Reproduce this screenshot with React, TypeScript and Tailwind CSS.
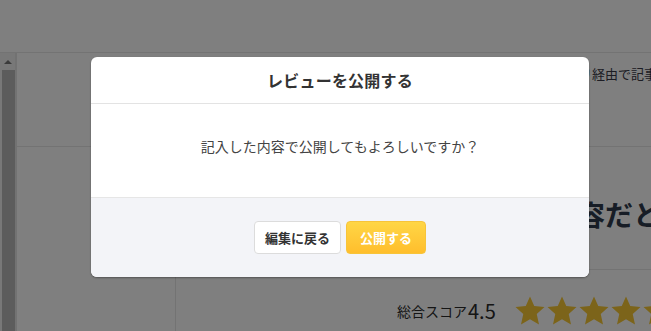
import React from "react";

const Star = () => (
  <svg width="30" height="30" viewBox="0 0 24 24" className="shrink-0">
    <polygon
      points="12,0.4 15.4,8 23.6,8.8 17.4,14.4 19.2,22.8 12,18.5 4.8,22.8 6.6,14.4 0.4,8.8 8.6,8"
      fill="#f8c935"
    />
  </svg>
);

export default function App() {
  return (
    <div
      className="relative w-[651px] h-[331px] overflow-hidden bg-white"
      style={{ fontFamily: '"Noto Sans CJK JP", "Noto Sans", sans-serif' }}
    >
      <div className="h-[53px] border-b border-[#e6e6e6] bg-white" />
      <div className="flex h-[278px]">
        <div className="w-[15px] flex flex-col bg-[#f1f1f1]">
          <div className="h-[17px] flex items-center justify-center">
            <div className="w-0 h-0 border-l-[4px] border-r-[4px] border-b-[4px] border-l-transparent border-r-transparent border-b-[#777]" />
          </div>
          <div className="flex-1 ml-[2px] w-[13px] bg-[#b8b8b8]" />
        </div>
        <div className="w-[2px] bg-[#e4e4e4]" />
        <div className="flex-1 flex flex-col overflow-hidden">
          <div className="h-[94px] shrink-0 border-b border-[#e6e6e6] pt-[12px] pl-[536px] whitespace-nowrap text-[13px] leading-[18px] text-[#3a3a48]">
            アプリ経由で記事が読めます
          </div>
          <div className="mt-[53px] pl-[532px] whitespace-nowrap text-[28px] leading-[28px] font-bold text-[#2f3a4c]">
            内容だと思います
          </div>
          <div className="mt-[41px] ml-[158px] flex-1 rounded-tl-lg border-t border-l border-[#e6e6e6] pt-[26px] pl-[221px]">
            <div className="flex items-center whitespace-nowrap text-[#2a2a2a]">
              <span className="text-[14px] leading-[30px]">総合スコア</span>
              <span className="text-[20px] leading-[30px] ml-[1px]">4.5</span>
              <div className="flex gap-[2px] ml-[19px]">
                <Star />
                <Star />
                <Star />
                <Star />
                <Star />
              </div>
            </div>
          </div>
        </div>
      </div>

      <div className="absolute inset-0 bg-black/50" />

      <div className="absolute left-[91px] top-[57px] w-[498px] h-[220px] rounded-[6px] bg-white overflow-hidden flex flex-col shadow-[0_1px_2px_rgba(0,0,0,0.35)]">
        <div className="h-[47px] shrink-0 flex items-center justify-center border-b border-[#e3e3e3]">
          <span className="text-[16px] font-bold text-[#333] tracking-[0.2px]">レビューを公開する</span>
        </div>
        <div className="h-[94px] shrink-0 pt-[32px] flex justify-center border-b border-[#e6e6e6]">
          <span className="text-[14px] leading-[20px] text-[#444]">記入した内容で公開してもよろしいですか？</span>
        </div>
        <div className="flex-1 bg-[#f3f4f8] flex justify-center items-start pt-[23px] gap-[5px]">
          <button className="w-[87px] h-[33px] bg-white border border-[#dcdcdc] rounded-[4px] text-[13px] font-bold text-[#333] flex items-center justify-center">
            編集に戻る
          </button>
          <button className="w-[80px] h-[33px] rounded-[4px] border border-[#f7c43a] bg-gradient-to-b from-[#ffd645] to-[#ffbe2c] text-[13px] font-bold text-white flex items-center justify-center">
            公開する
          </button>
        </div>
      </div>
    </div>
  );
}
